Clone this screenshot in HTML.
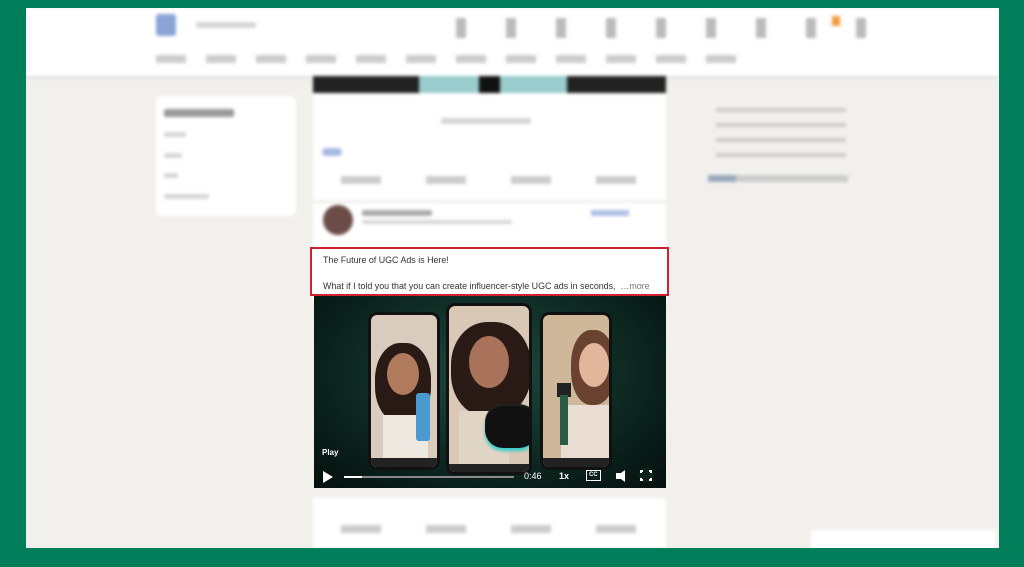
<!DOCTYPE html>
<html><head><meta charset="utf-8"><style>
*{margin:0;padding:0;box-sizing:border-box}
body{width:1024px;height:567px;background:#007e5a;position:relative;overflow:hidden;font-family:"Liberation Sans",sans-serif}
#in{position:absolute;left:26px;top:8px;width:973px;height:540px;background:#f1f0ed;overflow:hidden}
.blur{filter:blur(1.5px)}
.a{position:absolute}
.g{background:#d6d6d6;border-radius:2px}
.ph{position:absolute;border:3px solid #111;border-radius:9px;overflow:hidden}
</style></head><body>
<div id="in">
 <div class="blur">
  <div class="a" style="left:0;top:0;width:973px;height:68px;background:#fff;box-shadow:0 2px 3px #ddd"></div>
  <div class="a" style="left:130px;top:6px;width:20px;height:22px;background:#8aa4d8;border-radius:3px"></div>
  <div class="a g" style="left:170px;top:14px;width:60px;height:6px"></div>
  <div class="a" style="left:430px;top:10px;width:420px;height:20px;background:repeating-linear-gradient(90deg,#bbb 0 10px,transparent 10px 50px)"></div>
  <div class="a" style="left:806px;top:8px;width:8px;height:10px;background:#f29a3c"></div>
  <div class="a" style="left:130px;top:47px;width:600px;height:8px;background:repeating-linear-gradient(90deg,#ccc 0 30px,transparent 30px 50px)"></div>
  <div class="a" style="left:287px;top:68px;width:353px;height:17px;background:linear-gradient(90deg,#222 0 30%,#9cc 30% 47%,#111 47% 53%,#9cc 53% 72%,#222 72%)"></div>
  <div class="a" style="left:130px;top:88px;width:140px;height:120px;background:#fff;border-radius:6px"></div>
  <div class="a g" style="left:138px;top:101px;width:70px;height:8px;background:#999"></div>
  <div class="a g" style="left:138px;top:124px;width:22px;height:5px"></div>
  <div class="a g" style="left:138px;top:145px;width:18px;height:5px"></div>
  <div class="a g" style="left:138px;top:165px;width:14px;height:5px"></div>
  <div class="a g" style="left:138px;top:186px;width:45px;height:5px"></div>
  <div class="a" style="left:287px;top:85px;width:353px;height:107px;background:#fff"></div>
  <div class="a g" style="left:415px;top:110px;width:90px;height:6px"></div>
  <div class="a" style="left:296px;top:140px;width:20px;height:8px;background:#a8b8e0;border-radius:4px"></div>
  <div class="a" style="left:315px;top:168px;width:320px;height:8px;background:repeating-linear-gradient(90deg,#ccc 0 40px,transparent 40px 85px)"></div>
  <div class="a" style="left:287px;top:195px;width:353px;height:100px;background:#fff"></div>
  <div class="a" style="left:297px;top:197px;width:30px;height:30px;border-radius:50%;background:#6a4d46"></div>
  <div class="a g" style="left:336px;top:202px;width:70px;height:6px;background:#aaa"></div>
  <div class="a g" style="left:336px;top:212px;width:150px;height:4px"></div>
  <div class="a" style="left:565px;top:202px;width:38px;height:6px;background:#b0c0e6"></div>
  <div class="a" style="left:690px;top:100px;width:130px;height:60px;background:repeating-linear-gradient(180deg,#ccc 0 4px,transparent 4px 15px)"></div>
  <div class="a" style="left:682px;top:167px;width:140px;height:7px;background:linear-gradient(90deg,#9ab 0 20%,#ccc 20%)"></div>
  <div class="a" style="left:287px;top:490px;width:353px;height:50px;background:#fff"></div>
  <div class="a" style="left:315px;top:517px;width:320px;height:8px;background:repeating-linear-gradient(90deg,#ccc 0 40px,transparent 40px 85px)"></div>
  <div class="a" style="left:785px;top:522px;width:185px;height:20px;background:#fff"></div>
 </div>
 <div class="a" style="left:284px;top:239px;width:359px;height:49px;background:#fff;border:2px solid #d32030;font-size:8.9px;color:#333;padding:5px 0 0 11px;line-height:13px;white-space:nowrap">The Future of UGC Ads is Here!<br><br>What if I told you that you can create influencer-style UGC ads in seconds,&nbsp; <span style="color:#777">…more</span></div>
 <div class="a" style="left:288px;top:288px;width:352px;height:192px;background:radial-gradient(ellipse at 50% 40%,#1c4b3e,#0a201a 70%,#05100d);overflow:hidden">
  <div class="ph" style="left:54px;top:16px;width:72px;height:158px;background:#d9cbbd">
   <div class="a" style="left:4px;top:28px;width:56px;height:80px;border-radius:45%;background:#2a1a16"></div>
   <div class="a" style="left:16px;top:38px;width:32px;height:42px;border-radius:50%;background:#b07a5c"></div>
   <div class="a" style="left:12px;top:100px;width:45px;height:45px;background:#eee8e0"></div>
   <div class="a" style="left:45px;top:78px;width:14px;height:48px;background:#4a9ad0;border-radius:3px"></div>
   <div class="a" style="left:0;top:143px;width:72px;height:15px;background:#222"></div>
  </div>
  <div class="ph" style="left:132px;top:7px;width:86px;height:172px;background:#d9c8b6">
   <div class="a" style="left:2px;top:16px;width:80px;height:95px;border-radius:45%;background:#2a1a16"></div>
   <div class="a" style="left:20px;top:30px;width:40px;height:52px;border-radius:50%;background:#a8735a"></div>
   <div class="a" style="left:10px;top:105px;width:50px;height:55px;background:#e0d4c4"></div>
   <div class="a" style="left:36px;top:100px;width:52px;height:42px;border-radius:18px;background:#111;box-shadow:0 -2px 0 #222,0 3px 3px #3cc"></div>
   <div class="a" style="left:0;top:158px;width:86px;height:14px;background:#222"></div>
  </div>
  <div class="ph" style="left:226px;top:16px;width:72px;height:158px;background:#cfb79a">
   <div class="a" style="left:28px;top:15px;width:44px;height:75px;border-radius:45%;background:#6a4232"></div>
   <div class="a" style="left:36px;top:28px;width:30px;height:44px;border-radius:50%;background:#e2b69a"></div>
   <div class="a" style="left:18px;top:90px;width:54px;height:55px;background:#e8ddd0"></div>
   <div class="a" style="left:14px;top:68px;width:14px;height:14px;background:#222"></div>
   <div class="a" style="left:17px;top:80px;width:8px;height:50px;background:#2a5a45"></div>
   <div class="a" style="left:0;top:143px;width:72px;height:15px;background:#222"></div>
  </div>
  <div class="a" style="left:8px;top:152px;color:#fff;font-size:8px;font-weight:bold">Play</div>
  <div class="a" style="left:9px;top:175px;width:0;height:0;border-left:10px solid #fff;border-top:6px solid transparent;border-bottom:6px solid transparent"></div>
  <div class="a" style="left:30px;top:180px;width:170px;height:2px;background:#888"><div style="width:18px;height:2px;background:#fff"></div></div>
  <div class="a" style="left:210px;top:175px;color:#fff;font-size:9px">0:46</div>
  <div class="a" style="left:245px;top:175px;color:#fff;font-size:9px;font-weight:bold">1x</div>
  <div class="a" style="left:272px;top:174px;border:1.5px solid #fff;color:#fff;font-size:6px;font-weight:bold;padding:0 2px;line-height:9px">CC</div>
  <div class="a" style="left:302px;top:177px;width:5px;height:6px;background:#fff"></div>
  <div class="a" style="left:303px;top:174px;width:0;height:0;border-right:8px solid #fff;border-top:6px solid transparent;border-bottom:6px solid transparent"></div>
  <div class="a" style="left:326px;top:174px;width:12px;height:11px;border:2px solid #fff"></div>
  <div class="a" style="left:329px;top:172px;width:6px;height:15px;background:#0b2219"></div>
  <div class="a" style="left:324px;top:177px;width:16px;height:5px;background:#0b2219"></div>
 </div>
</div>
</body></html>
